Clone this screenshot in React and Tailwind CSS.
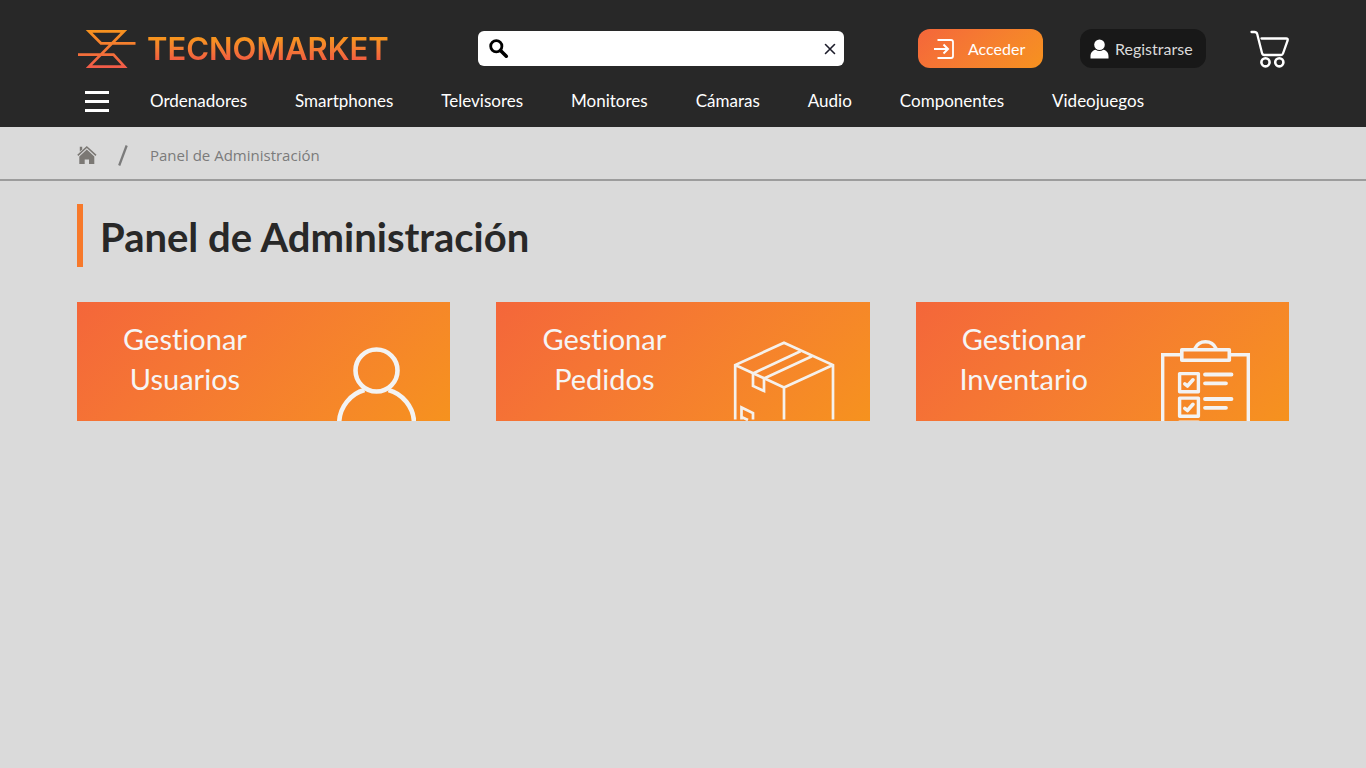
const categories = [
  "Ordenadores",
  "Smartphones",
  "Televisores",
  "Monitores",
  "Cámaras",
  "Audio",
  "Componentes",
  "Videojuegos",
];

function LogoMark() {
  return (
    <svg width="60" height="41" viewBox="0 0 60 41" fill="none" aria-hidden="true">
      <defs>
        <linearGradient id="mark" gradientUnits="userSpaceOnUse" x1="0" y1="2" x2="0" y2="40">
          <stop offset="0" stopColor="#f7931e" />
          <stop offset="1" stopColor="#f15a4a" />
        </linearGradient>
      </defs>
      <path
        d="M58.5 15.3H24L12 3.3H47L12 38.6H47.5L36.5 26.7H1"
        stroke="url(#mark)"
        strokeWidth="2.7"
      />
    </svg>
  );
}

function SearchIcon() {
  return (
    <svg width="20" height="20" viewBox="0 0 20 20" fill="none" stroke="#000" role="img" aria-label="Buscar">
      <circle cx="7.3" cy="7.3" r="5.6" strokeWidth="2.8" />
      <path d="M11.5 11.5L17.3 17.2" strokeWidth="3.6" strokeLinecap="round" />
    </svg>
  );
}

function ClearIcon() {
  return (
    <svg width="12" height="12" viewBox="0 0 12 12" fill="none" stroke="#1d1d2b" strokeWidth="1.6" strokeLinecap="round" aria-hidden="true">
      <path d="M1.5 1.5L10.5 10.5M10.5 1.5L1.5 10.5" />
    </svg>
  );
}

function LoginIcon() {
  return (
    <svg width="20" height="20" viewBox="0 0 20 20" fill="none" stroke="#fff" strokeWidth="1.8" aria-hidden="true">
      <path d="M3.5 1H17Q19 1 19 3V17Q19 19 17 19H3.5" />
      <path d="M0 10H14M9.5 5.5L14 10L9.5 14.5" strokeWidth="2" />
    </svg>
  );
}

function PersonIcon() {
  return (
    <svg width="19" height="20" viewBox="0 0 19 20" fill="#fff" aria-hidden="true">
      <circle cx="9.5" cy="5.7" r="5.3" />
      <path d="M0.5 19.5V17.5C0.5 13.5 2.5 11.6 5.6 10.8Q9.5 13.4 13.4 10.8C16.5 11.6 18.5 13.5 18.5 17.5V19.5Z" />
    </svg>
  );
}

function CartIcon() {
  return (
    <svg width="39" height="38" viewBox="0 0 39 38" fill="none" stroke="#fff" strokeWidth="2.3" strokeLinecap="round" strokeLinejoin="round" aria-hidden="true">
      <path d="M1.5 2H4.5Q6.6 2 7.2 4L12 23Q12.5 25 14.2 25H31Q32.5 25 33 23.5L37.6 10.5Q38.2 8.5 36.2 8.5H11.5" />
      <circle cx="15.5" cy="32.3" r="4.1" strokeWidth="2.6" />
      <circle cx="29.3" cy="32.3" r="4.1" strokeWidth="2.6" />
    </svg>
  );
}

function HomeIcon() {
  return (
    <svg width="20" height="20" viewBox="0 0 20 20" fill="#7b7874" aria-hidden="true">
      <path d="M2.8 1.8H5.2V4.4L2.8 6.6Z" />
      <path d="M0.8 10.4L9.8 2L19 10.4" fill="none" stroke="#7b7874" strokeWidth="1.6" />
      <path d="M9.8 4.6L17.3 11.4V19H12V14.5H7.7V19H2.3V11.4Z" />
    </svg>
  );
}

function UserArt() {
  return (
    <svg width="105" height="85" viewBox="0 0 105 85" fill="none" stroke="#f3f3f3" strokeWidth="4.6" aria-hidden="true">
      <circle cx="65.5" cy="34.5" r="21" />
      <path d="M28.2 87C28.2 71 40 57.5 53.5 54M77.5 54C91 57.5 103 71 103 87" />
    </svg>
  );
}

function BoxArt() {
  return (
    <svg width="105" height="85" viewBox="0 0 105 85" fill="none" stroke="#f5f1ec" strokeWidth="2.7" aria-hidden="true">
      <path d="M4.2 83.5V29L53 6.8L102 29V83.5M4.2 29L53 51.5L102 29M53 51.5V83.5" />
      <path d="M22 37.5L69.5 15.2M33 42.5L81 20.2" />
      <path d="M22 37.5V50L33 55V42.5" />
      <path d="M10.5 83.5V71.5L22 77V83.5M10.5 81L17 84" />
    </svg>
  );
}

function Task({ y }) {
  return (
    <g transform={`translate(28 ${y})`}>
      <rect x="1.6" y="1.6" width="18.8" height="18.2" strokeWidth="3.4" />
      <path d="M6.8 11.8L9.4 14L15 7.8" strokeWidth="3.6" />
      <path d="M27 2.5H53.5M27 11.3H48" strokeWidth="3.8" />
    </g>
  );
}

function ClipboardArt() {
  return (
    <svg width="105" height="85" viewBox="0 0 105 85" fill="none" stroke="#f3f3f3" strokeLinecap="round" strokeLinejoin="round" aria-hidden="true">
      <path d="M31 18.7H12.7V90M80 18.7H98.3V90" strokeWidth="3.4" strokeLinejoin="miter" />
      <rect x="31.8" y="13.8" width="47.5" height="10.4" strokeWidth="3.6" />
      <path d="M45 12.5C49 3.5 62 3.5 66 12.5" strokeWidth="3.4" />
      <Task y={36} />
      <Task y={60.5} />
      <Task y={84.5} />
    </svg>
  );
}

const panels = [
  { noun: "Usuarios", Art: UserArt },
  { noun: "Pedidos", Art: BoxArt },
  { noun: "Inventario", Art: ClipboardArt },
];

export default function App() {
  return (
    <div className="min-h-screen bg-[#dadada] font-['Lato',sans-serif]">
      <header className="bg-[#282828] px-[77px] pt-7 pb-2 text-white">
        <div className="flex items-center">
          <a href="#inicio" className="flex shrink-0 items-center gap-2.5">
            <LogoMark />
            <span className="bg-linear-to-b from-[#f7931e] from-25% to-[#f15a40] to-80% bg-clip-text font-['Inter',sans-serif] text-[31px] leading-10 font-semibold text-transparent">
              TECNOMARKET
            </span>
          </a>
          <form role="search" className="mr-[74px] ml-auto flex h-[35px] w-[366px] items-center rounded-md bg-white pr-2 pl-[11px]">
            <label htmlFor="buscar" className="shrink-0">
              <SearchIcon />
            </label>
            <input id="buscar" type="text" className="min-w-0 flex-1 bg-transparent px-2 text-black outline-none" />
            <button type="reset" aria-label="Borrar" className="shrink-0">
              <ClearIcon />
            </button>
          </form>
          <button type="button" className="flex h-[39px] w-[125px] shrink-0 items-center gap-3.5 rounded-xl bg-linear-135 from-[#f4663a] to-[#f6921e] pl-4 text-base">
            <LoginIcon />
            Acceder
          </button>
          <button type="button" className="ml-[37px] flex h-[39px] w-[126px] shrink-0 items-center gap-1.5 rounded-xl bg-[#181818] pl-2.5 text-base text-[#dadada]">
            <PersonIcon />
            Registrarse
          </button>
          <a href="#carrito" aria-label="Carrito" className="ml-11 shrink-0">
            <CartIcon />
          </a>
        </div>
        <nav className="mt-3.5 flex h-9 items-center pl-2">
          <button type="button" aria-label="Menú" className="mr-[41px] flex w-6 flex-col gap-1.5">
            <span className="h-[3px] bg-white" />
            <span className="h-[3px] bg-white" />
            <span className="h-[3px] bg-white" />
          </button>
          <ul className="flex gap-12 text-[17px]">
            {categories.map((name) => (
              <li key={name}>
                <a href={`#${name.toLowerCase()}`}>{name}</a>
              </li>
            ))}
          </ul>
        </nav>
      </header>

      <nav aria-label="Ruta" className="flex h-[54px] items-center border-b-2 border-[#9c9c9c] px-[77px] pt-1 text-[#7b7b7b]">
        <a href="#inicio" aria-label="Inicio">
          <HomeIcon />
        </a>
        <svg width="10" height="21" viewBox="0 0 10 21" className="ml-[21px]" aria-hidden="true">
          <path d="M1.2 20.5L8.7 0.5" stroke="#7b7b7b" strokeWidth="2.3" />
        </svg>
        <span className="ml-[22px] font-['Open_Sans',sans-serif] text-[15px]">Panel de Administración</span>
      </nav>

      <main className="px-[77px] pt-[23px]">
        <h1 className="flex h-[63px] items-center border-l-6 border-[#f7792b] pt-1 pl-[17px] text-[40px] leading-[63px] font-bold text-[#282828]">
          Panel de Administración
        </h1>
        <div className="mt-[35px] grid grid-cols-3 gap-[46px]">
          {panels.map(({ noun, Art }) => (
            <a
              key={noun}
              href={`#${noun.toLowerCase()}`}
              className="flex h-[119px] items-end justify-between overflow-hidden bg-linear-135 from-[#f4663a] to-[#f6921e] pr-[34px]"
            >
              <span className="w-[216px] self-start pt-[17px] text-center text-[29px] leading-10 text-[#f5f5f5] [font-variant-ligatures:none]">
                Gestionar
                <br />
                {noun}
              </span>
              <Art />
            </a>
          ))}
        </div>
      </main>
    </div>
  );
}
